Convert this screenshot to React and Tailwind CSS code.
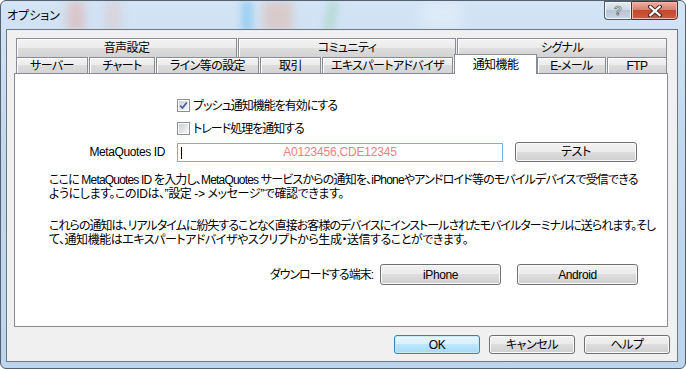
import React from "react";

const row1 = [
  { label: "音声設定", cls: "w-[221px]" },
  { label: "コミュニティ", cls: "w-[218px] ml-px" },
  { label: "シグナル", cls: "w-[210px] ml-px" },
];

const row2 = [
  { label: "サーバー", cls: "w-[72px]" },
  { label: "チャート", cls: "w-[66px] ml-px" },
  { label: "ライン等の設定", cls: "w-[103px] ml-px" },
  { label: "取引", cls: "w-[61px] ml-px" },
  { label: "エキスパートアドバイザ", cls: "w-[131px] ml-px" },
  { label: "通知機能", cls: "w-[83px] ml-px", selected: true },
  { label: "E-メール", cls: "w-[69px]" },
  { label: "FTP", cls: "w-[60px] ml-px" },
];

const tabBase =
  "flex items-center justify-center border-x border-t border-[#898c95] text-[12px] leading-none tracking-[-0.6px] text-black";
const tabIdle =
  "bg-[linear-gradient(#f3f3f3,#ebebeb_50%,#dddddd_50%,#d3d3d3)] shadow-[inset_1px_1px_0_#ffffff]";

function Button({ children, cls, primary }) {
  return (
    <button
      className={
        "flex items-center justify-center rounded-[3px] border text-[12px] leading-none tracking-[-0.4px] text-black " +
        (primary
          ? "border-[#3c7fb1] bg-[linear-gradient(#eaf6fd,#d9f0fc_50%,#bee6fd_50%,#a7d9f5)] shadow-[inset_0_0_0_1px_#c8eafc] "
          : "border-[#707070] bg-[linear-gradient(#f2f2f2,#ebebeb_50%,#dddddd_50%,#cfcfcf)] shadow-[inset_0_0_0_1px_#fbfbfb] ") +
        cls
      }
    >
      {children}
    </button>
  );
}

function Checkbox({ checked, label }) {
  return (
    <div className="flex h-[13px] items-center gap-[3px]">
      <div className="flex h-[13px] w-[13px] items-center justify-center border border-[#8e8f8f] bg-white p-px">
        <div className="relative h-full w-full bg-[linear-gradient(135deg,#cbcfd5,#f7f7f7)]">
          {checked && (
            <svg viewBox="0 0 9 9" className="absolute inset-0 h-[9px] w-[9px]">
              <path d="M1.2 4.6 L3.5 7 L7.8 1.4" fill="none" stroke="#4a5f97" strokeWidth="1.7" />
            </svg>
          )}
        </div>
      </div>
      <span className="text-[12px] leading-none tracking-[-1px] text-black">{label}</span>
    </div>
  );
}

export default function App() {
  return (
    <div className="relative h-[369px] w-[686px] overflow-hidden rounded-[6px] border border-[#55606e] bg-[linear-gradient(180deg,#d3e4f5,#c2d8ee_40%,#bcd5ee)] [font-family:'Liberation_Sans','Noto_Sans_CJK_JP',sans-serif] [font-feature-settings:'palt']">
      {/* blurred glass streaks */}
      <div className="absolute left-[66px] top-0 h-[30px] w-[18px] bg-[#e79a8c] opacity-40 blur-[5px]" />
      <div className="absolute left-[104px] top-0 h-[30px] w-[16px] bg-[#e8b4aa] opacity-30 blur-[5px]" />
      <div className="absolute left-[240px] top-0 h-[30px] w-[12px] bg-[#6fc0ef] opacity-50 blur-[3px]" />
      <div className="absolute left-[262px] top-0 h-[30px] w-[30px] bg-[#e3a78f] opacity-40 blur-[5px]" />
      <div className="absolute left-[324px] top-0 h-[30px] w-[12px] rotate-12 bg-[#9ccfb3] opacity-40 blur-[3px]" />
      <div className="absolute left-[420px] top-0 h-[30px] w-[40px] bg-[#e6f0fa] opacity-60 blur-[6px]" />

      {/* title bar */}
      <div className="relative flex h-[28px]">
        <div className="ml-[6px] mt-[9px] text-[12px] leading-none text-black">オプション</div>
        <div className="ml-auto mr-[7px] flex h-[19px]">
          <div className="flex w-[27px] items-center justify-center rounded-bl-[4px] border border-r-0 border-[#4f5b69] bg-[linear-gradient(#e4ebf3,#ccd7e3_50%,#b7c5d4_50%,#c9d5e2)] shadow-[inset_0_0_0_1px_#f2f6fa]">
            <span className="text-[13px] font-bold leading-none text-white [-webkit-text-stroke:0.6px_#3d4856]">?</span>
          </div>
          <div className="flex w-[47px] items-center justify-center rounded-br-[4px] border border-[#5a2a23] bg-[linear-gradient(#eab0a3,#d9816f_45%,#c7462f_50%,#d05a3c)] shadow-[inset_0_0_0_1px_#f0b9ad]">
            <svg viewBox="0 0 14 12" className="h-[12px] w-[14px]">
              <path d="M2 1.5 L12 10.5 M12 1.5 L2 10.5" stroke="#4a2620" strokeWidth="4" strokeLinecap="square" />
              <path d="M2.3 1.8 L11.7 10.2 M11.7 1.8 L2.3 10.2" stroke="#ffffff" strokeWidth="2.2" strokeLinecap="square" />
            </svg>
          </div>
        </div>
      </div>

      {/* client area */}
      <div className="relative ml-[5px] flex h-[333px] w-[672px] flex-col border border-[#6d7784] bg-[#f0f0f0]">
        {/* tabs */}
        <div className="ml-[9px] mt-[8px] flex h-[19px]">
          {row1.map((t) => (
            <div key={t.label} className={tabBase + " h-[19px] " + tabIdle + " " + t.cls}>
              {t.label}
            </div>
          ))}
        </div>
        <div className="ml-[9px] flex h-[16px] items-end">
          {row2.map((t) =>
            t.selected ? (
              <div key={t.label} className={tabBase + " relative top-px z-10 h-[20px] bg-white " + t.cls}>
                {t.label}
              </div>
            ) : (
              <div key={t.label} className={tabBase + " h-[16px] " + tabIdle + " " + t.cls}>
                {t.label}
              </div>
            )
          )}
        </div>

        {/* panel */}
        <div className="ml-[7px] flex h-[254px] w-[654px] flex-col border border-[#898c95] bg-white">
          <div className="ml-[162px] mt-[25px]">
            <Checkbox checked label="プッシュ通知機能を有効にする" />
          </div>
          <div className="ml-[162px] mt-[10px]">
            <Checkbox label="トレード処理を通知する" />
          </div>

          <div className="mt-[7px] flex h-[20px] items-center">
            <div className="w-[150px] text-right text-[12px] leading-none tracking-[-0.4px] text-black">MetaQuotes ID</div>
            <div className="relative ml-[12px] flex h-[19px] w-[326px] items-center justify-center border border-[#7eaed9] bg-white">
              <div className="absolute left-[3px] top-[3px] h-[12px] w-px bg-black" />
              <span className="text-[12px] leading-none tracking-[-0.2px] text-[#f08080]">A0123456,CDE12345</span>
            </div>
            <Button cls="ml-[12px] h-[20px] w-[122px]">テスト</Button>
          </div>

          <div className="mt-[11px] flex flex-col whitespace-nowrap pl-[34px] text-[12px] leading-[14px] text-black">
            <span className="tracking-[-0.82px]">
              ここに MetaQuotes ID を入力し、MetaQuotes サービスからの通知を、iPhoneやアンドロイド等のモバイルデバイスで受信できる
            </span>
            <span className="tracking-[-0.4px]">ようにします。このIDは、”設定 -&gt; メッセージ”で確認できます。</span>
          </div>

          <div className="mt-[18px] flex flex-col whitespace-nowrap pl-[34px] text-[12px] leading-[14px] text-black">
            <span className="tracking-[-0.98px]">
              これらの通知は、リアルタイムに紛失することなく直接お客様のデバイスにインストールされたモバイルターミナルに送られます。そし
            </span>
            <span className="tracking-[-0.45px]">て、通知機能はエキスパートアドバイザやスクリプトから生成・送信することができます。</span>
          </div>

          <div className="mt-[17px] flex h-[21px] items-center">
            <div className="w-[358px] text-right text-[12px] leading-none tracking-[-1px] text-black">ダウンロードする端末:</div>
            <Button cls="ml-[7px] h-[21px] w-[121px]">iPhone</Button>
            <Button cls="ml-[16px] h-[21px] w-[121px]">Android</Button>
          </div>
        </div>

        {/* dialog buttons */}
        <div className="mr-[7px] mt-[8px] flex justify-end gap-[9px]">
          <Button primary cls="h-[19px] w-[86px]">OK</Button>
          <Button cls="h-[19px] w-[86px]">キャンセル</Button>
          <Button cls="h-[19px] w-[86px]">ヘルプ</Button>
        </div>
      </div>
    </div>
  );
}
